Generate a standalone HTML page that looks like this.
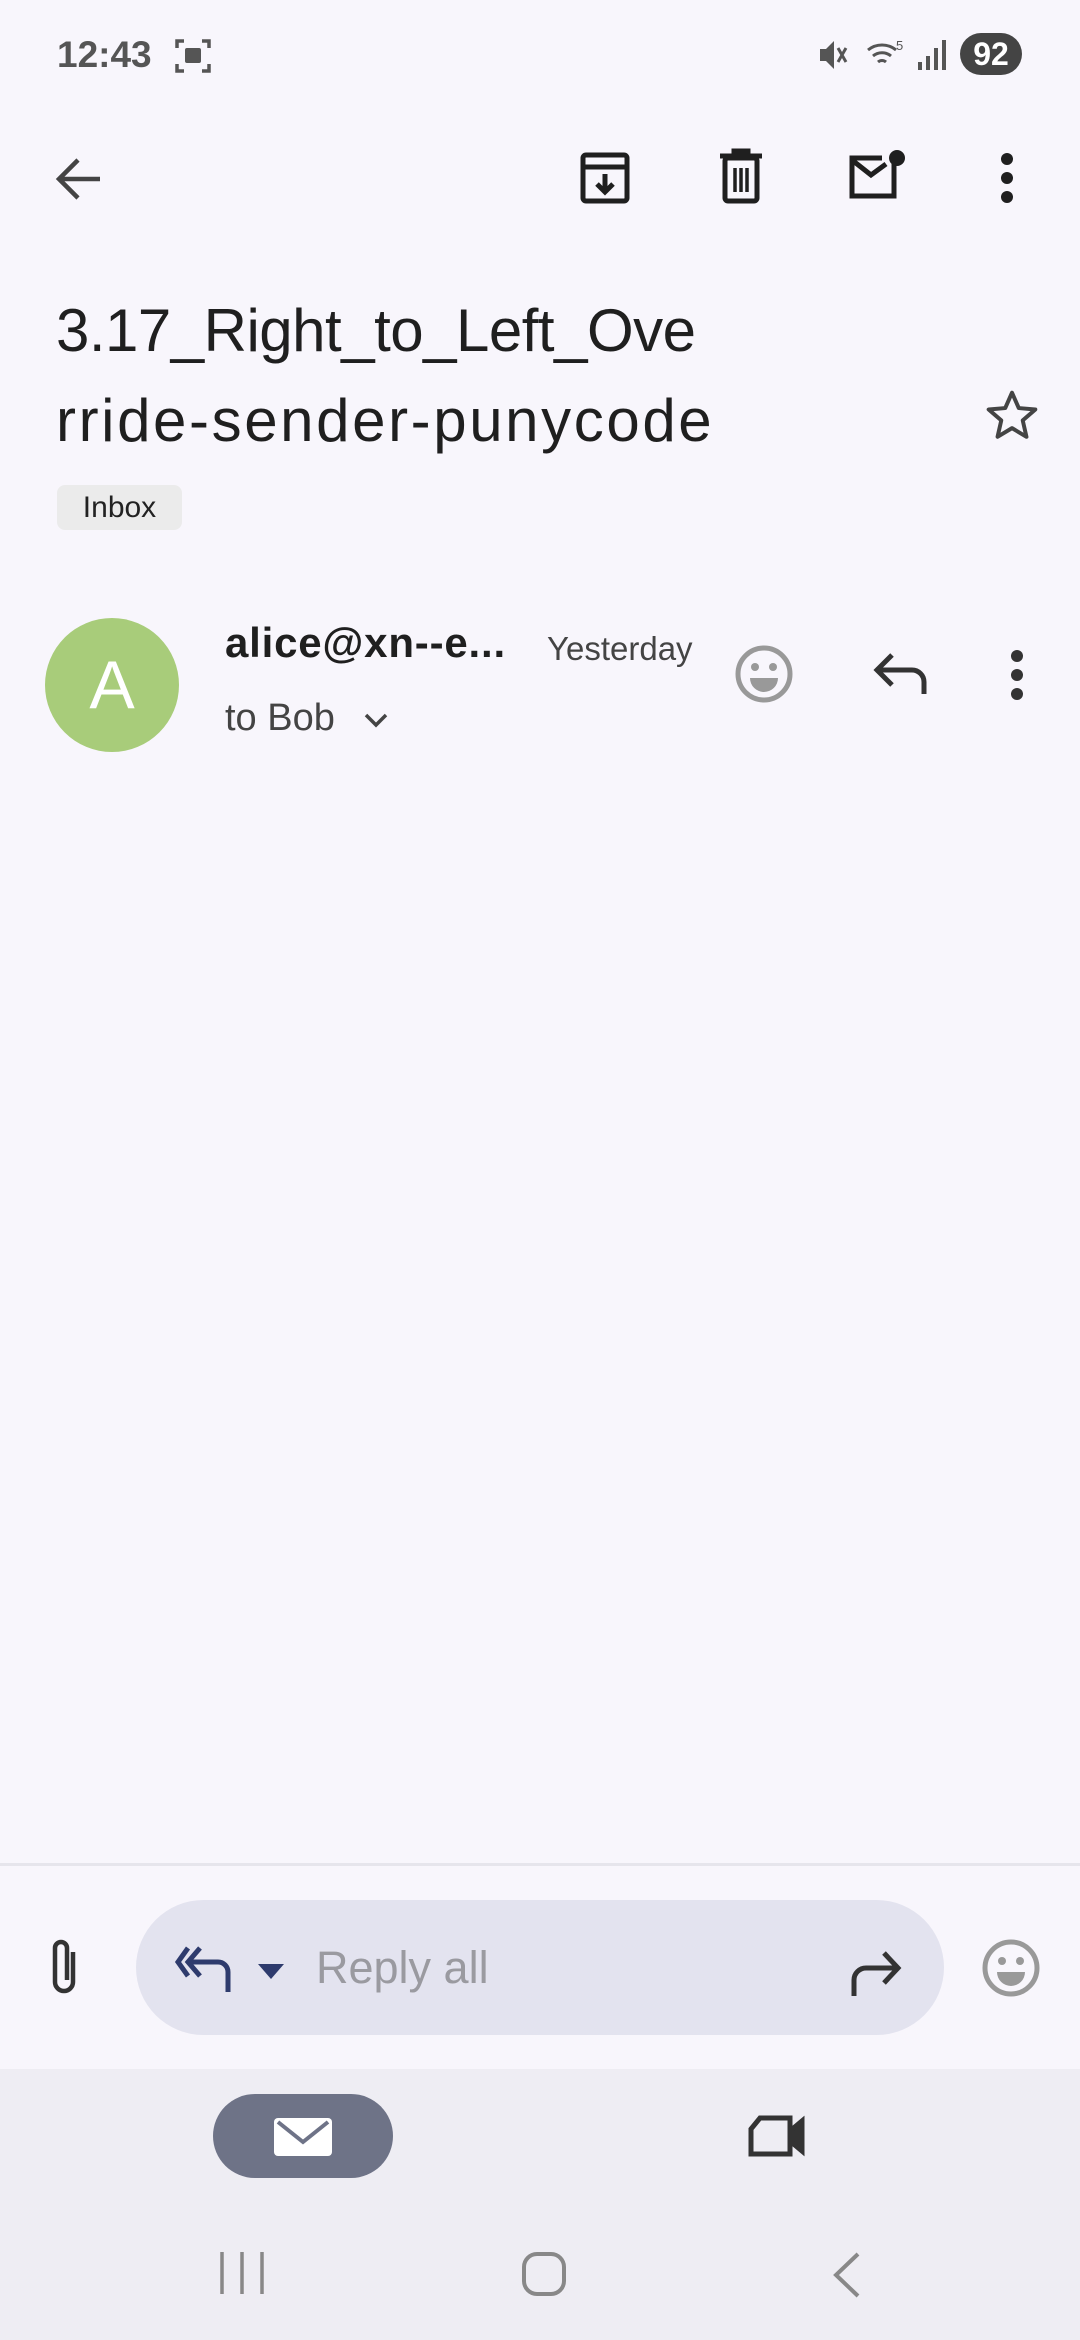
<!DOCTYPE html>
<html><head><meta charset="utf-8"><style>
*{margin:0;padding:0;box-sizing:border-box}
body{width:1080px;height:2340px;background:#f8f6fc;font-family:"Liberation Sans",sans-serif;position:relative;overflow:hidden;color:#1f1f1f}
.a{position:absolute}
svg{position:absolute;overflow:visible}
</style></head><body>
<div class="a" style="left:57px;top:34px;font-size:37px;font-weight:bold;color:#555">12:43</div>
<svg style="left:175px;top:38px" width="36" height="36" viewBox="0 0 36 36" fill="none" stroke="#555" stroke-width="3.5"><path d="M2 10V3h7M27 3h7v7M34 26v7h-7M9 33H2v-7"/><rect x="10" y="10" width="16" height="15" rx="2" fill="#555" stroke="none"/></svg>
<svg style="left:818px;top:38px" width="30" height="34" viewBox="0 0 30 34" fill="#555"><path d="M2 11h6l8-8v28l-8-8H2z"/><path d="M20 10l8 14M28 10l-8 14" stroke="#555" stroke-width="3"/></svg>
<svg style="left:866px;top:38px" width="40" height="34" viewBox="0 0 40 34" fill="none" stroke="#555" stroke-width="3"><path d="M2 12a22 22 0 0 1 28 0M7 18a14 14 0 0 1 18 0M12 24a6 6 0 0 1 8 0"/><text x="30" y="12" font-size="13" fill="#555" stroke="none" font-family="Liberation Sans">5</text></svg>
<svg style="left:918px;top:40px" width="28" height="30" viewBox="0 0 28 30" fill="#555"><rect x="0" y="22" width="4" height="8"/><rect x="8" y="16" width="4" height="14"/><rect x="16" y="8" width="4" height="22"/><rect x="24" y="0" width="4" height="30"/></svg>
<div class="a" style="left:960px;top:33px;width:62px;height:42px;border-radius:21px;background:#444;color:#fff;font-size:32px;font-weight:bold;text-align:center;line-height:42px">92</div>

<svg style="left:54px;top:156px" width="48" height="46" viewBox="0 0 48 46" fill="none" stroke="#444" stroke-width="4.5"><path d="M46 23H6M24 4L5 23l19 19"/></svg>
<svg style="left:580px;top:152px" width="50" height="52" viewBox="0 0 50 52" fill="none" stroke="#1f1f1f" stroke-width="5"><rect x="3" y="3" width="44" height="46" rx="3"/><path d="M3 15h44"/><path d="M25 22v18M17 32l8 8 8-8"/></svg>
<svg style="left:720px;top:150px" width="42" height="54" viewBox="0 0 42 54" fill="none" stroke="#1f1f1f" stroke-width="5"><path d="M0 6h42M14 4V1h14v3"/><rect x="5" y="8" width="32" height="43" rx="3"/><path d="M15 18v24M21 18v24M27 18v24" stroke-width="3.5"/></svg>
<svg style="left:848px;top:150px" width="60" height="52" viewBox="0 0 60 52" fill="none" stroke="#1f1f1f" stroke-width="5"><path d="M46 12V46H4V8h30"/><path d="M4 10l19 15 15-11"/><circle cx="49" cy="8" r="8" fill="#1f1f1f" stroke="none"/></svg>
<svg style="left:999px;top:153px" width="16" height="50" viewBox="0 0 16 50" fill="#1f1f1f"><circle cx="8" cy="6" r="6"/><circle cx="8" cy="25" r="6"/><circle cx="8" cy="44" r="6"/></svg>

<div class="a" style="left:56px;top:286px;font-size:60px;line-height:90px;color:#1f1f1f;letter-spacing:-0.5px;white-space:nowrap">3.17_Right_to_Left_Ove</div>
<div class="a" style="left:56px;top:376px;font-size:60px;line-height:90px;color:#1f1f1f;letter-spacing:2.6px;white-space:nowrap">rride-sender-punycode</div>
<svg style="left:984px;top:388px" width="56" height="56" viewBox="0 0 24 24" fill="none" stroke="#444" stroke-width="1.7" stroke-linejoin="round"><path d="M12 2l2.9 6.6 7.1.6-5.4 4.7 1.6 7L12 17.2 5.8 20.9l1.6-7L2 9.2l7.1-.6z"/></svg>
<div class="a" style="left:57px;top:485px;width:125px;height:45px;border-radius:8px;background:#ebebeb;font-size:30px;line-height:45px;text-align:center;color:#222">Inbox</div>

<div class="a" style="left:45px;top:618px;width:134px;height:134px;border-radius:50%;background:#a8cc7a;color:#fff;font-size:68px;line-height:134px;text-align:center">A</div>
<div class="a" style="left:225px;top:619px;font-size:42px;font-weight:bold;color:#1f1f1f;white-space:nowrap;letter-spacing:0.8px">alice@xn--e...</div>
<div class="a" style="left:547px;top:630px;font-size:33px;color:#444">Yesterday</div>
<div class="a" style="left:225px;top:697px;font-size:38px;color:#444">to Bob</div>
<svg style="left:364px;top:712px" width="24" height="16" viewBox="0 0 24 16" fill="none" stroke="#444" stroke-width="3.5"><path d="M2 3l10 10 10-10"/></svg>
<svg style="left:734px;top:644px" width="60" height="60" viewBox="0 0 60 60"><circle cx="30" cy="30" r="26" fill="none" stroke="#999" stroke-width="5"/><circle cx="21" cy="23" r="4" fill="#999"/><circle cx="39" cy="23" r="4" fill="#999"/><path d="M16 34h28a14 14 0 0 1-28 0z" fill="#999"/></svg>
<svg style="left:872px;top:652px" width="56" height="44" viewBox="0 0 56 44" fill="none" stroke="#333" stroke-width="5"><path d="M52 42V30a12 12 0 0 0-12-12H6M20 3L5 18l15 15"/></svg>
<svg style="left:1009px;top:650px" width="16" height="50" viewBox="0 0 16 50" fill="#333"><circle cx="8" cy="6" r="6"/><circle cx="8" cy="25" r="6"/><circle cx="8" cy="44" r="6"/></svg>

<div class="a" style="left:0;top:1863px;width:1080px;height:3px;background:#e6e5ec"></div>
<svg style="left:48px;top:1938px" width="34" height="60" viewBox="0 0 34 60" fill="none" stroke="#333" stroke-width="4.5"><path d="M25 14v30a9 9 0 0 1-18 0V10a6 6 0 0 1 12 0v32"/></svg>
<div class="a" style="left:136px;top:1900px;width:808px;height:135px;border-radius:68px;background:#e3e3ef"></div>
<svg style="left:174px;top:1944px" width="62" height="50" viewBox="0 0 62 50" fill="none" stroke="#2e3b6d" stroke-width="5"><path d="M14 4L4 18l10 14M26 4L14 18l12 14M14 18h30a10 10 0 0 1 10 10v20"/></svg>
<svg style="left:258px;top:1964px" width="26" height="16" viewBox="0 0 26 16" fill="#2e3b6d"><path d="M0 0h26L13 15z"/></svg>
<div class="a" style="left:316px;top:1942px;font-size:45px;color:#9a9aa0">Reply all</div>
<svg style="left:850px;top:1950px" width="52" height="46" viewBox="0 0 52 46" fill="none" stroke="#333" stroke-width="5"><path d="M4 46V30a12 12 0 0 1 12-12h30M34 3l14 15-14 15"/></svg>
<svg style="left:981px;top:1938px" width="60" height="60" viewBox="0 0 60 60"><circle cx="30" cy="30" r="26" fill="none" stroke="#999" stroke-width="5"/><circle cx="21" cy="23" r="4" fill="#999"/><circle cx="39" cy="23" r="4" fill="#999"/><path d="M16 34h28a14 14 0 0 1-28 0z" fill="#999"/></svg>

<div class="a" style="left:0;top:2069px;width:1080px;height:271px;background:#eeedf3"></div>
<div class="a" style="left:213px;top:2094px;width:180px;height:84px;border-radius:42px;background:#6e7387"></div>
<svg style="left:274px;top:2118px" width="58" height="38" viewBox="0 0 58 38"><rect width="58" height="38" rx="4" fill="#fff"/><path d="M4 4l25 20 25-20" fill="none" stroke="#6e7387" stroke-width="4"/></svg>
<svg style="left:748px;top:2115px" width="58" height="42" viewBox="0 0 58 42" fill="none" stroke="#333" stroke-width="5"><path d="M12 3h30v36H3V14z"/><path d="M42 16l12-10v30L42 26z" fill="#333"/></svg>
<svg style="left:220px;top:2252px" width="44" height="42" viewBox="0 0 44 42" stroke="#888" stroke-width="3.5"><path d="M2 0v42M22 0v42M42 0v42"/></svg>
<svg style="left:522px;top:2252px" width="44" height="44" viewBox="0 0 44 44" fill="none" stroke="#888" stroke-width="4"><rect x="2" y="2" width="40" height="40" rx="13"/></svg>
<svg style="left:832px;top:2252px" width="28" height="46" viewBox="0 0 28 46" fill="none" stroke="#888" stroke-width="4"><path d="M26 2L4 23l22 21"/></svg>
</body></html>
